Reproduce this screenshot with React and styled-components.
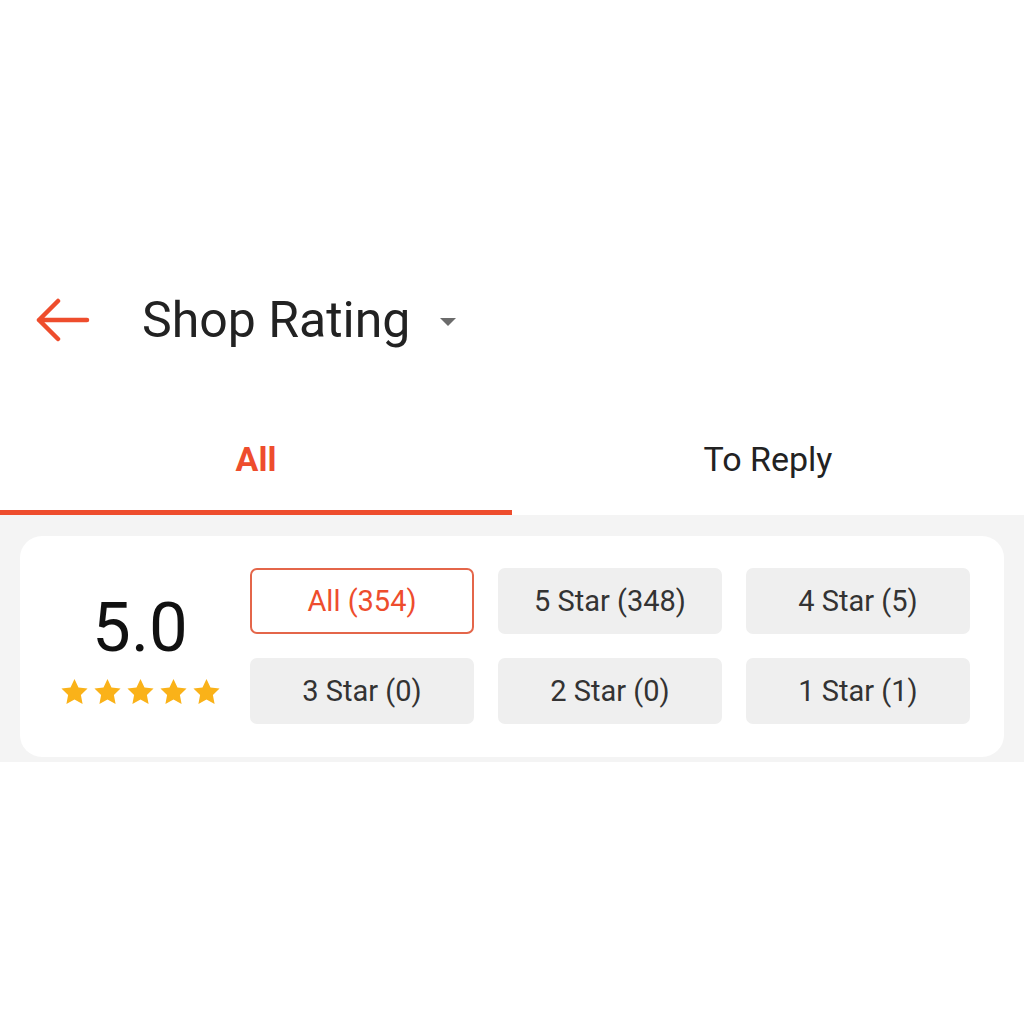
import React from 'react';
import styled, { createGlobalStyle } from 'styled-components';

const GlobalStyle = createGlobalStyle`
  body {
    margin: 0;
    background: #fff;
    font-family: Roboto, "Liberation Sans", sans-serif;
  }
`;

const Page = styled.div`
  width: 1024px;
  height: 1024px;
  padding-top: 280px;
  box-sizing: border-box;
  background: #fff;
`;

const Header = styled.div`
  height: 80px;
  display: flex;
  align-items: center;
  padding-left: 34px;
`;

const BackButton = styled.div`
  width: 56px;
  height: 44px;
  display: flex;
  align-items: center;
  margin-right: 52px;
`;

const Title = styled.div`
  font-size: 50px;
  color: #222;
`;

const Caret = styled.div`
  width: 0;
  height: 0;
  margin-left: 30px;
  margin-top: 4px;
  border-left: 8px solid transparent;
  border-right: 8px solid transparent;
  border-top: 8px solid #6b6b6b;
`;

const Tabs = styled.div`
  margin-top: 50px;
  display: flex;
  height: 105px;
`;

const Tab = styled.div`
  flex: 1;
  display: flex;
  align-items: center;
  justify-content: center;
  padding-bottom: 2px;
  box-sizing: border-box;
  font-size: 34px;
  font-weight: ${(p) => (p.active ? 700 : 400)};
  color: ${(p) => (p.active ? '#ee4d2d' : '#222')};
  border-bottom: 5px solid ${(p) => (p.active ? '#ee4d2d' : 'transparent')};
`;

const Section = styled.div`
  background: #f4f4f4;
  padding: 21px 20px 5px;
`;

const Card = styled.div`
  background: #fff;
  border-radius: 22px;
  padding: 32px 0 33px 20px;
  display: flex;
  gap: 10px;
`;

const Summary = styled.div`
  width: 200px;
  display: flex;
  flex-direction: column;
  align-items: center;
  justify-content: center;
  padding-top: 4px;
`;

const Score = styled.div`
  font-size: 69px;
  line-height: 76px;
  color: #111;
`;

const Stars = styled.div`
  display: flex;
  gap: 4px;
  margin-top: 12px;
`;

const Filters = styled.div`
  display: grid;
  grid-template-columns: repeat(3, 224px);
  grid-auto-rows: 66px;
  column-gap: 24px;
  row-gap: 24px;
`;

const Chip = styled.div`
  display: flex;
  align-items: center;
  justify-content: center;
  border-radius: 7px;
  font-size: 29px;
  box-sizing: border-box;
  background: ${(p) => (p.active ? '#fff' : '#efefef')};
  color: ${(p) => (p.active ? '#ee4d2d' : '#333')};
  border: 2px solid ${(p) => (p.active ? '#e4664a' : '#efefef')};
`;

const Star = () => (
  <svg width="29" height="28" viewBox="0 0 24 23">
    <path
      d="M12 0.8l3.3 6.9 7.5 1-5.5 5.2 1.4 7.5L12 17.8l-6.7 3.6 1.4-7.5L1.2 8.7l7.5-1z"
      fill="#fab219"
    />
  </svg>
);

const filters = [
  { label: 'All (354)', active: true },
  { label: '5 Star (348)' },
  { label: '4 Star (5)' },
  { label: '3 Star (0)' },
  { label: '2 Star (0)' },
  { label: '1 Star (1)' },
];

const App = () => (
  <Page>
    <GlobalStyle />
    <Header>
      <BackButton>
        <svg width="56" height="44" viewBox="0 0 56 44">
          <path
            d="M53 22H5M24 3L5 22l19 19"
            fill="none"
            stroke="#ee4d2d"
            strokeWidth="4.5"
            strokeLinecap="round"
            strokeLinejoin="round"
          />
        </svg>
      </BackButton>
      <Title>Shop Rating</Title>
      <Caret />
    </Header>
    <Tabs>
      <Tab active>All</Tab>
      <Tab>To Reply</Tab>
    </Tabs>
    <Section>
      <Card>
        <Summary>
          <Score>5.0</Score>
          <Stars>
            {[0, 1, 2, 3, 4].map((i) => <Star key={i} />)}
          </Stars>
        </Summary>
        <Filters>
          {filters.map((f) => (
            <Chip key={f.label} active={f.active}>{f.label}</Chip>
          ))}
        </Filters>
      </Card>
    </Section>
  </Page>
);

export default App;
